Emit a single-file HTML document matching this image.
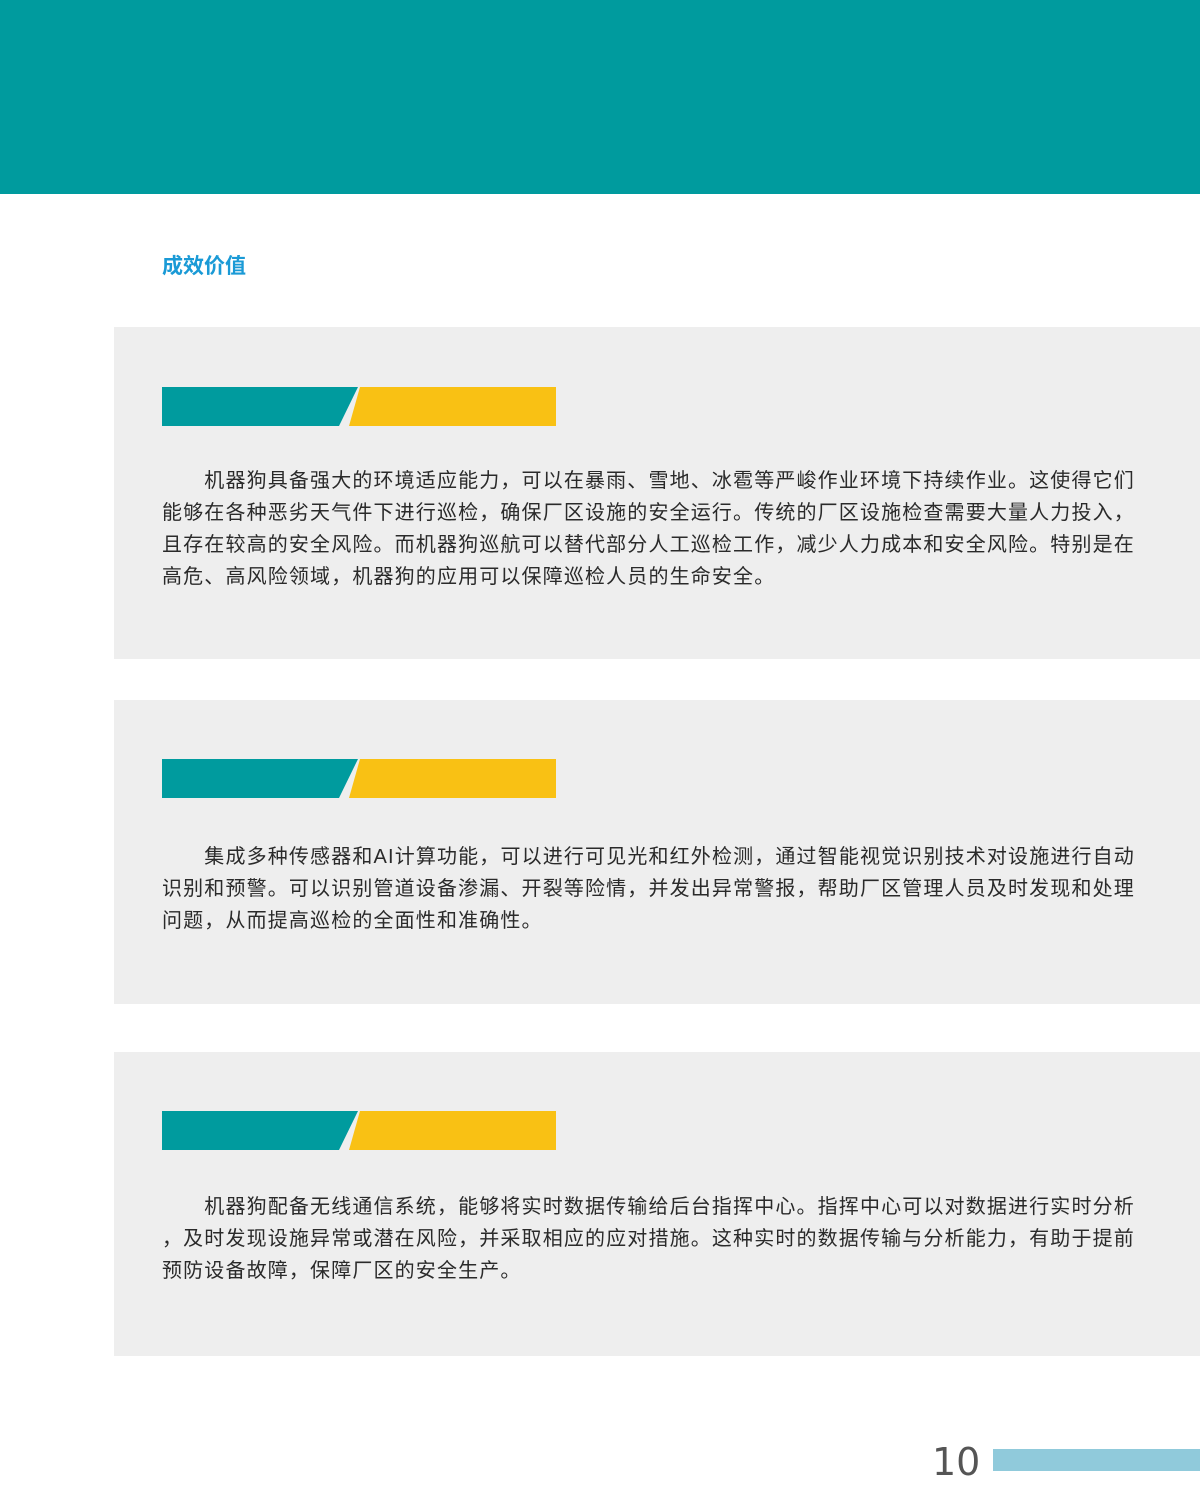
<!DOCTYPE html>
<html><head><meta charset="utf-8"><style>
*{margin:0;padding:0;box-sizing:border-box}
body{width:1200px;height:1492px;background:#fff;position:relative;overflow:hidden;font-family:"Liberation Sans","Noto Sans CJK SC",sans-serif}
.hdr{position:absolute;left:0;top:0;width:1200px;height:194px;background:#009b9e}
.title{position:absolute;left:162px;top:254px;font-size:21px;font-weight:bold;color:#1a9ad6;line-height:26px}
.panel{position:absolute;left:114px;width:1086px;background:#eeeeee}
.bars{position:absolute;left:48px;width:394px;height:39px}
.txt{position:absolute;left:48px;width:1030px;font-size:20px;line-height:32px;color:#2a2a2a;white-space:nowrap;letter-spacing:1.15px}
.num{position:absolute;left:932px;top:1440px;font-size:38px;color:#555;line-height:44px;font-family:"DejaVu Sans","Liberation Sans",sans-serif}
.pbar{position:absolute;left:993px;top:1449px;width:207px;height:22px;background:#90cadb}
</style></head><body>
<div class="hdr"></div>
<div class="title">成效价值</div>

<div class="panel" style="top:327px;height:332px">
<svg class="bars" style="top:60px" viewBox="0 0 394 39"><polygon points="0,0 196,0 177,39 0,39" fill="#009b9e"/><polygon points="198,0 394,0 394,39 187,39" fill="#f9c114"/></svg>
<div class="txt" style="top:138px">　　机器狗具备强大的环境适应能力，可以在暴雨、雪地、冰雹等严峻作业环境下持续作业。这使得它们<br>能够在各种恶劣天气件下进行巡检，确保厂区设施的安全运行。传统的厂区设施检查需要大量人力投入，<br>且存在较高的安全风险。而机器狗巡航可以替代部分人工巡检工作，减少人力成本和安全风险。特别是在<br>高危、高风险领域，机器狗的应用可以保障巡检人员的生命安全。</div>
</div>

<div class="panel" style="top:700px;height:304px">
<svg class="bars" style="top:59px" viewBox="0 0 394 39"><polygon points="0,0 196,0 177,39 0,39" fill="#009b9e"/><polygon points="198,0 394,0 394,39 187,39" fill="#f9c114"/></svg>
<div class="txt" style="top:141px">　　集成多种传感器和AI计算功能，可以进行可见光和红外检测，通过智能视觉识别技术对设施进行自动<br>识别和预警。可以识别管道设备渗漏、开裂等险情，并发出异常警报，帮助厂区管理人员及时发现和处理<br>问题，从而提高巡检的全面性和准确性。</div>
</div>

<div class="panel" style="top:1052px;height:304px">
<svg class="bars" style="top:59px" viewBox="0 0 394 39"><polygon points="0,0 196,0 177,39 0,39" fill="#009b9e"/><polygon points="198,0 394,0 394,39 187,39" fill="#f9c114"/></svg>
<div class="txt" style="top:139px">　　机器狗配备无线通信系统，能够将实时数据传输给后台指挥中心。指挥中心可以对数据进行实时分析<br>，及时发现设施异常或潜在风险，并采取相应的应对措施。这种实时的数据传输与分析能力，有助于提前<br>预防设备故障，保障厂区的安全生产。</div>
</div>

<div class="num">10</div>
<div class="pbar"></div>
</body></html>
